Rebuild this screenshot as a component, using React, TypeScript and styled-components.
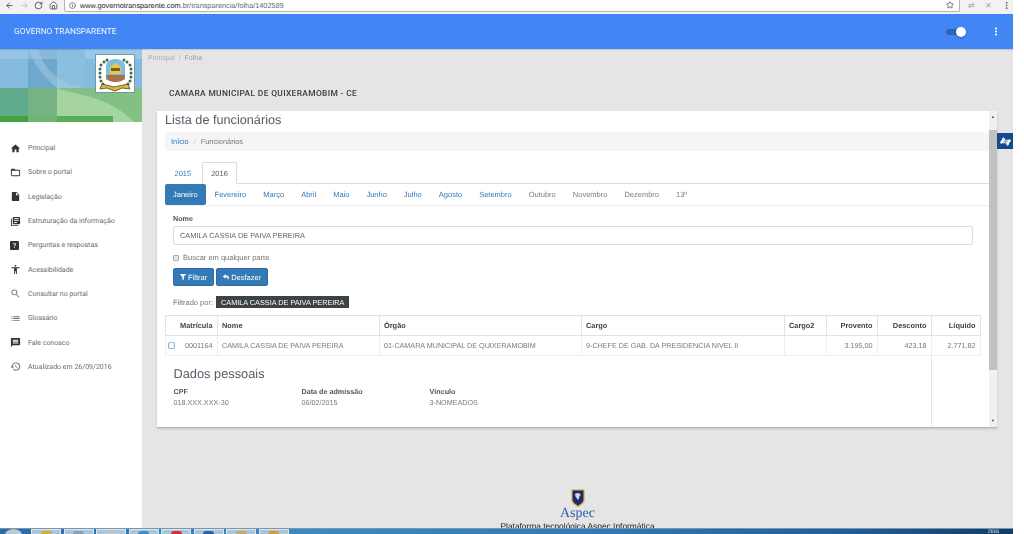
import React from 'react';
import styled, { createGlobalStyle } from 'styled-components';
import { ArrowLeft, ArrowRight, RotateCw, Home, Info, Star, MoreVertical } from 'lucide-react';
import {
  MdHome,
  MdFolderOpen,
  MdInsertDriveFile,
  MdLibraryBooks,
  MdSearch,
  MdList,
  MdMessage,
  MdHistory,
  MdAccessibility,
  MdMoreVert,
} from 'react-icons/md';
import { BsQuestionSquareFill } from 'react-icons/bs';
import { FaFilter, FaReply, FaAmericanSignLanguageInterpreting, FaRegSquare } from 'react-icons/fa';

const menu = [
  { icon: <MdHome />, label: 'Principal' },
  { icon: <MdFolderOpen />, label: 'Sobre o portal' },
  { icon: <MdInsertDriveFile />, label: 'Legislação' },
  { icon: <MdLibraryBooks />, label: 'Estruturação da informação' },
  { icon: <BsQuestionSquareFill size={9} />, label: 'Perguntas e respostas' },
  { icon: <MdAccessibility />, label: 'Acessibilidade' },
  { icon: <MdSearch />, label: 'Consultar no portal', light: true },
  { icon: <MdList />, label: 'Glossário', light: true },
  { icon: <MdMessage />, label: 'Fale conosco' },
  { icon: <MdHistory />, label: 'Atualizado em 26/09/2016', light: true },
];

const months = [
  'Janeiro', 'Fevereiro', 'Março', 'Abril', 'Maio', 'Junho', 'Julho',
  'Agosto', 'Setembro', 'Outubro', 'Novembro', 'Dezembro', '13º',
];

const taskButtons = ['#d9a93a', '#8aa0b8', '#b9c4cc', '#3b8fd0', '#d8342c', '#2b5fa8', '#c9a860', '#d89a3c'];

function Banner() {
  return (
    <BannerArt viewBox="0 0 142 73" preserveAspectRatio="none">
      <rect width="142" height="39" fill="#85bbdf" />
      <rect width="28" height="10" fill="#96c5e4" />
      <rect x="28" width="29" height="39" fill="#6ea8cd" />
      <rect x="28" width="29" height="10" fill="#89b9d8" />
      <rect x="57" width="28" height="39" fill="#8bbfe0" />
      <rect x="85" width="57" height="10" fill="#9ac9e6" />
      <path d="M38 0 C44 22 60 34 84 39 L57 39 C46 30 34 16 28 0 Z" fill="#a3cde6" fillOpacity="0.5" />
      <rect y="39" width="142" height="34" fill="#83c084" />
      <rect y="39" width="28" height="28" fill="#5fab8c" />
      <rect x="28" y="39" width="29" height="28" fill="#76b384" />
      <path d="M57 39 C74 46 108 46 134 73 L57 73 Z" fill="#a6d3a2" />
      <rect y="67" width="28" height="6" fill="#41a23f" />
      <rect x="28" y="67" width="29" height="6" fill="#6fb56f" />
      <rect x="57" y="67" width="56" height="6" fill="#58ad58" />
    </BannerArt>
  );
}

function Emblem() {
  const leaves = [
    [4, 9], [3, 13], [3, 17], [3, 21], [4, 25], [6, 28], [7, 6], [10, 4],
    [33, 9], [34, 13], [34, 17], [34, 21], [33, 25], [31, 28], [30, 6], [27, 4],
  ];
  return (
    <svg width="37" height="36" viewBox="0 0 37 36">
      <rect width="37" height="36" fill="#fff" />
      {leaves.map(([x, y]) => (
        <circle key={`${x}-${y}`} cx={x} cy={y} r="1.5" fill="#44664c" />
      ))}
      <path d="M9 24 V10 C9 5 14 3 18.5 3 C23 3 28 5 28 10 V24 Z" fill="#7dbde0" />
      <path d="M13 11 L18.5 7 L24 11 V18 H13 Z" fill="#e8c64e" />
      <rect x="14" y="12" width="9" height="3" fill="#7a5c20" />
      <path d="M9 19 H28 C28 25 23 26 18.5 26 C14 26 9 25 9 19 Z" fill="#a9714a" />
      <path d="M5 28 L17 31 L31 28 L33 33 L25 32 L18 35 L10 32 L3 33 Z" fill="#e3b92f" stroke="#2a3320" strokeWidth="0.7" />
    </svg>
  );
}

function AspecShield() {
  return (
    <svg width="14" height="18" viewBox="0 0 14 18">
      <path d="M1 1 H13 V11 C13 14 9 16 7 17.5 C5 16 1 14 1 11 Z" fill="#1d2a72" stroke="#e0a92a" strokeWidth="1.2" />
      <path d="M4 5 C6 3 9 4 10 6 C8 6 9 9 7 11 C6 9 4 8 4 5 Z" fill="#cfd8ea" />
    </svg>
  );
}

export default function App() {
  return (
    <Page>
      <GlobalStyle />
      <Window>
        <ChromeBar>
          <ChromeIcons>
            <ArrowLeft size={9} strokeWidth={2.4} />
            <DimIcon><ArrowRight size={9} strokeWidth={2} /></DimIcon>
            <RotateCw size={9} strokeWidth={2.4} />
            <Home size={9} strokeWidth={2.2} />
          </ChromeIcons>
          <AddressBar>
            <Info size={7} strokeWidth={2.4} />
            <Url>
              www.<b>governotransparente.com</b>.<span>br/transparencia/folha/1402589</span>
            </Url>
            <StarSlot><Star size={8} strokeWidth={2.4} /></StarSlot>
          </AddressBar>
          <Extensions>
            <ExtIcon>⇄</ExtIcon>
            <ExtIcon>✕</ExtIcon>
            <MoreVertical size={9} strokeWidth={2.6} />
          </Extensions>
        </ChromeBar>

        <AppBar>
          <Brand>GOVERNO TRANSPARENTE</Brand>
          <Toggle><ToggleKnob /></Toggle>
          <BarMenu><MdMoreVert /></BarMenu>
        </AppBar>

        <Body>
          <Sidebar>
            <BannerBox>
              <Banner />
              <EmblemFrame><Emblem /></EmblemFrame>
            </BannerBox>
            <Nav>
              {menu.map((item) => (
                <NavItem key={item.label}>
                  <NavIcon $light={item.light}>{item.icon}</NavIcon>
                  {item.label}
                </NavItem>
              ))}
            </Nav>
          </Sidebar>

          <Main>
            <TopCrumbs>Principal &nbsp;/&nbsp; <CrumbNow>Folha</CrumbNow></TopCrumbs>
            <OrgName>CAMARA MUNICIPAL DE QUIXERAMOBIM - CE</OrgName>

            <Card>
              <CardContent>
                <Title>Lista de funcionários</Title>
                <Breadcrumb>
                  <BlueLink>Início</BlueLink>
                  <CrumbSep>/</CrumbSep>
                  <span>Funcionários</span>
                </Breadcrumb>

                <Tabs>
                  <Tab>2015</Tab>
                  <Tab $active>2016</Tab>
                </Tabs>

                <Pills>
                  {months.map((m, i) => (
                    <Pill key={m} $active={i === 0} $muted={i >= 9}>{m}</Pill>
                  ))}
                </Pills>

                <FilterForm>
                  <FieldLabel>Nome</FieldLabel>
                  <TextInput>CAMILA CASSIA DE PAIVA PEREIRA</TextInput>
                  <CheckRow>
                    <CheckBox />
                    Buscar em qualquer parte
                  </CheckRow>
                  <Buttons>
                    <ActionButton><FaFilter /> Filtrar</ActionButton>
                    <ActionButton><FaReply /> Desfazer</ActionButton>
                  </Buttons>
                  <FilteredBy>
                    Filtrado por:
                    <FilterTag>CAMILA CASSIA DE PAIVA PEREIRA</FilterTag>
                  </FilteredBy>
                </FilterForm>

                <Table>
                  <colgroup>
                    <col width="52" />
                    <col width="162" />
                    <col width="202" />
                    <col width="203" />
                    <col width="42" />
                    <col width="51" />
                    <col width="54" />
                    <col width="49" />
                  </colgroup>
                  <thead>
                    <tr>
                      <Th $right>Matrícula</Th>
                      <Th>Nome</Th>
                      <Th>Órgão</Th>
                      <Th>Cargo</Th>
                      <Th>Cargo2</Th>
                      <Th $right>Provento</Th>
                      <Th $right>Desconto</Th>
                      <Th $right>Líquido</Th>
                    </tr>
                  </thead>
                  <tbody>
                    <tr>
                      <Td $right>
                        <Expander><FaRegSquare /></Expander>
                        0001164
                      </Td>
                      <Td>CAMILA CASSIA DE PAIVA PEREIRA</Td>
                      <Td>01-CAMARA MUNICIPAL DE QUIXERAMOBIM</Td>
                      <Td>9-CHEFE DE GAB. DA PRESIDENCIA NIVEL II</Td>
                      <Td />
                      <Td $right>3.195,00</Td>
                      <Td $right>423,18</Td>
                      <Td $right>2.771,82</Td>
                    </tr>
                    <tr>
                      <DetailCell colSpan={7}>
                        <DetailTitle>Dados pessoais</DetailTitle>
                        <DetailGrid>
                          <div>
                            <DetailLabel>CPF</DetailLabel>
                            <DetailValue>018.XXX.XXX-30</DetailValue>
                          </div>
                          <div>
                            <DetailLabel>Data de admissão</DetailLabel>
                            <DetailValue>06/02/2015</DetailValue>
                          </div>
                          <div>
                            <DetailLabel>Vínculo</DetailLabel>
                            <DetailValue>3-NOMEADOS</DetailValue>
                          </div>
                        </DetailGrid>
                      </DetailCell>
                      <EmptyEnd />
                    </tr>
                  </tbody>
                </Table>
              </CardContent>

              <ScrollTrack>
                <ScrollArrow>▲</ScrollArrow>
                <ScrollThumb />
                <ScrollArrow>▼</ScrollArrow>
              </ScrollTrack>
            </Card>

            <Footer>
              <AspecShield />
              <AspecName>Aspec</AspecName>
              <Platform>Plataforma tecnológica Aspec Informática</Platform>
            </Footer>

            <A11yWidget><FaAmericanSignLanguageInterpreting /></A11yWidget>
          </Main>
        </Body>

        <Taskbar>
          <StartOrb />
          {taskButtons.map((c) => (
            <TaskButton key={c} $dot={c} />
          ))}
          <TrayClock>2016</TrayClock>
        </Taskbar>
      </Window>
    </Page>
  );
}

const GlobalStyle = createGlobalStyle`
  html, body, #root {
    margin: 0;
    height: 100%;
    background: #fff;
  }
  * {
    box-sizing: border-box;
  }
`;

const Page = styled.div`
  width: 1024px;
  height: 534px;
  overflow: hidden;
  font-family: 'Liberation Sans', Arial, sans-serif;
  font-size: 7.5px;
  color: #6f6f6f;
  text-rendering: geometricPrecision;
`;

/* the reference is a scaled-down capture, so everything sits slightly soft */
const Window = styled.div`
  width: 1013px;
  height: 534px;
  display: flex;
  flex-direction: column;
  filter: blur(0.3px);
`;

const ChromeBar = styled.div`
  height: 14px;
  flex: none;
  display: flex;
  align-items: flex-start;
  background: #f2f2f2;
  color: #555;
`;

const ChromeIcons = styled.div`
  width: 64px;
  height: 10px;
  padding: 1px 0 0 5px;
  display: flex;
  gap: 5.5px;
`;

const DimIcon = styled.span`
  color: #bbb;
`;

const AddressBar = styled.div`
  flex: 1;
  height: 13px;
  margin-top: -1px;
  padding: 0 5px 0 4px;
  display: flex;
  align-items: center;
  gap: 4px;
  background: #fff;
  border: 1px solid #b4b4b4;
  border-top: none;
  border-radius: 0 0 2px 2px;
`;

const Url = styled.div`
  flex: 1;
  font-size: 7.3px;
  color: #2b2b2b;
  white-space: nowrap;

  b {
    font-weight: 400;
    color: #1a1a1a;
  }
  span {
    color: #5c6a7c;
  }
`;

const StarSlot = styled.span`
  display: flex;
  color: #555;
`;

const Extensions = styled.div`
  width: 53px;
  height: 10px;
  padding: 1px 0 0 8px;
  display: flex;
  gap: 7px;
  color: #555;
`;

const ExtIcon = styled.span`
  width: 10px;
  font-size: 8px;
  line-height: 9px;
  color: #aaa;
`;

const AppBar = styled.header`
  height: 35px;
  flex: none;
  display: flex;
  align-items: center;
  padding: 0 11px 0 14px;
  background: #4285f4;
  color: #fff;
  box-shadow: 0 1px 1px rgba(0, 0, 0, 0.12);
  position: relative;
  z-index: 1;
`;

const Brand = styled.div`
  flex: 1;
  font-family: Roboto, sans-serif;
  font-size: 8.4px;
  color: #f2f6ff;
`;

const Toggle = styled.div`
  width: 19px;
  height: 6px;
  margin-right: 25px;
  background: #2f62bd;
  border-radius: 3px;
  display: flex;
  justify-content: flex-end;
  align-items: center;
`;

const ToggleKnob = styled.div`
  width: 10px;
  height: 10px;
  margin-right: -1px;
  border-radius: 50%;
  background: #fff;
  box-shadow: 0 1px 2px rgba(0, 0, 0, 0.3);
`;

const BarMenu = styled.div`
  width: 12px;
  display: flex;
  justify-content: center;
  font-size: 13px;
`;

const Body = styled.div`
  flex: 1;
  min-height: 0;
  display: flex;
`;

const Sidebar = styled.aside`
  width: 142px;
  flex: none;
  background: #fff;
`;

const BannerBox = styled.div`
  height: 73px;
  position: relative;
`;

const BannerArt = styled.svg`
  display: block;
  width: 100%;
  height: 100%;
`;

const EmblemFrame = styled.div`
  position: absolute;
  top: 5px;
  left: 95px;
  width: 40px;
  height: 39px;
  display: flex;
  align-items: center;
  justify-content: center;
  background: #fff;
  border: 1.5px solid #6f9aa6;
`;

const Nav = styled.nav`
  padding-top: 14px;
`;

const NavItem = styled.div`
  height: 24.3px;
  display: flex;
  align-items: center;
  padding-left: 10px;
  font-family: Roboto, sans-serif;
  font-size: 7px;
  color: #6b6b6b;
  white-space: nowrap;
`;

const NavIcon = styled.span<{ $light?: boolean }>`
  width: 18px;
  flex: none;
  display: flex;
  font-size: 11px;
  color: ${(p) => (p.$light ? '#707070' : '#333')};
`;

const Main = styled.main`
  flex: 1;
  min-width: 0;
  display: flex;
  flex-direction: column;
  background: #e4e5e4;
  overflow: hidden;
  position: relative;
`;

const TopCrumbs = styled.div`
  height: 20px;
  flex: none;
  padding: 6px 0 0 6px;
  font-size: 7px;
  color: #ababab;
`;

const CrumbNow = styled.span`
  color: #999;
`;

const OrgName = styled.div`
  height: 42px;
  flex: none;
  padding: 20px 0 0 27px;
  font-family: Roboto, sans-serif;
  font-size: 8.4px;
  font-weight: 500;
  letter-spacing: 0.36px;
  color: #3a3a3a;
`;

const Card = styled.section`
  height: 317px;
  flex: none;
  margin: 0 16px 0 15px;
  display: flex;
  background: #fff;
  border-bottom: 1px solid #b5b5b5;
  box-shadow: 0 1px 2px rgba(0, 0, 0, 0.15);
  overflow: hidden;
`;

const CardContent = styled.div`
  flex: 1;
  min-width: 0;
  padding: 0 0 0 8px;
  display: flex;
  flex-direction: column;
`;

const Title = styled.h1`
  margin: 0;
  height: 21px;
  padding-top: 1px;
  font-size: 12.7px;
  line-height: 16px;
  font-weight: 400;
  color: #555c66;
`;

const Breadcrumb = styled.div`
  height: 19px;
  display: flex;
  align-items: center;
  gap: 5px;
  padding-left: 6px;
  background: #f5f5f5;
  border-radius: 2px;
  font-size: 7.4px;
  color: #777;
`;

const BlueLink = styled.span`
  color: #337ab7;
`;

const CrumbSep = styled.span`
  color: #ccc;
`;

const Tabs = styled.div`
  height: 22px;
  flex: none;
  margin: 11px 0 0;
  display: flex;
  border-bottom: 1px solid #ddd;
`;

const Tab = styled.div<{ $active?: boolean }>`
  height: 22px;
  padding: 0 8.5px;
  margin-right: 1px;
  display: flex;
  align-items: center;
  font-size: 7.5px;
  color: ${(p) => (p.$active ? '#555' : '#337ab7')};
  background: #fff;
  border: 1px solid ${(p) => (p.$active ? '#ddd' : 'transparent')};
  border-bottom-color: ${(p) => (p.$active ? '#fff' : 'transparent')};
  border-radius: 2px 2px 0 0;
`;

const Pills = styled.div`
  height: 22px;
  flex: none;
  display: flex;
  border-bottom: 1px solid #eee;
`;

const Pill = styled.div<{ $active?: boolean; $muted?: boolean }>`
  height: 21px;
  padding: 0 8px;
  margin-right: 1px;
  display: flex;
  align-items: center;
  font-size: 7.5px;
  border-radius: 2px;
  color: ${(p) => (p.$active ? '#fff' : p.$muted ? '#7d7d7d' : '#337ab7')};
  background: ${(p) => (p.$active ? '#337ab7' : 'transparent')};
`;

const FilterForm = styled.div`
  padding: 8px 16px 0 8px;
  height: 109px;
  flex: none;
  display: flex;
  flex-direction: column;
  align-items: flex-start;
`;

const FieldLabel = styled.div`
  height: 12px;
  font-size: 7.2px;
  font-weight: 700;
  color: #555;
  line-height: 9px;
`;

const TextInput = styled.div`
  width: 100%;
  height: 19px;
  flex: none;
  padding-left: 6px;
  display: flex;
  align-items: center;
  background: #fff;
  border: 1px solid #ddd;
  border-radius: 2px;
  font-size: 7.4px;
  color: #666;
`;

const CheckRow = styled.div`
  height: 23px;
  flex: none;
  padding-top: 2px;
  display: flex;
  align-items: center;
  gap: 4px;
  font-size: 7.5px;
  color: #777;
`;

const CheckBox = styled.span`
  width: 6px;
  height: 6px;
  background: #e8e8e8;
  border: 1px solid #aaa;
  border-radius: 1px;
`;

const Buttons = styled.div`
  display: flex;
  gap: 2px;
  height: 18px;
  flex: none;
`;

const ActionButton = styled.div`
  height: 18px;
  padding: 0 6px;
  display: flex;
  align-items: center;
  gap: 2px;
  background: #337ab7;
  border: 1px solid #2e6da4;
  border-radius: 2px;
  color: #fff;
  font-size: 7.5px;

  svg {
    font-size: 6px;
  }
`;

const FilteredBy = styled.div`
  margin-top: 10px;
  height: 12px;
  display: flex;
  align-items: center;
  gap: 3px;
  font-size: 7.5px;
  color: #777;
`;

const FilterTag = styled.span`
  height: 12px;
  padding: 0 5px;
  display: flex;
  align-items: center;
  background: #3c4246;
  color: #fff;
  font-size: 7.3px;
`;

const Table = styled.table`
  width: 815px;
  flex: 1;
  border-collapse: collapse;
  table-layout: fixed;
`;

const Th = styled.th<{ $right?: boolean }>`
  height: 20px;
  padding: 0 4.5px 0 4px;
  font-size: 7.4px;
  font-weight: 700;
  color: #444;
  text-align: ${(p) => (p.$right ? 'right' : 'left')};
  border: 1px solid #e2e2e2;
  white-space: nowrap;
`;

const Td = styled.td<{ $right?: boolean }>`
  height: 20px;
  padding: 0 4.5px 0 4px;
  font-size: 7.2px;
  color: #7a7a7a;
  text-align: ${(p) => (p.$right ? 'right' : 'left')};
  border: 1px solid #efefef;
  white-space: nowrap;
  position: relative;
`;

const Expander = styled.span`
  position: absolute;
  left: 2px;
  top: 6px;
  font-size: 7px;
  color: #337ab7;
`;

const DetailCell = styled.td`
  padding: 10px 0 0 8px;
  vertical-align: top;
`;

const EmptyEnd = styled.td`
  border-left: 1px solid #e6e6e6;
`;

const DetailTitle = styled.div`
  height: 20px;
  font-size: 12.8px;
  line-height: 16px;
  color: #555c66;
`;

const DetailGrid = styled.div`
  display: grid;
  grid-template-columns: 128px 128px 128px;
`;

const DetailLabel = styled.div`
  font-size: 7.2px;
  font-weight: 700;
  line-height: 11px;
  color: #555;
`;

const DetailValue = styled.div`
  font-size: 7.2px;
  line-height: 11px;
  color: #7a7a7a;
`;

const ScrollTrack = styled.div`
  width: 8px;
  flex: none;
  display: flex;
  flex-direction: column;
  background: #f1f1f1;
`;

const ScrollArrow = styled.div`
  height: 12px;
  font-size: 4px;
  line-height: 12px;
  text-align: center;
  color: #444;
`;

const ScrollThumb = styled.div`
  height: 240px;
  margin: 7px 0 auto;
  background: #c1c1c1;
`;

const Footer = styled.footer`
  margin-top: 61px;
  display: flex;
  flex-direction: column;
  align-items: center;
  flex: none;
`;

const AspecName = styled.div`
  font-family: 'Liberation Serif', serif;
  font-size: 14px;
  line-height: 13px;
  color: #2c5fa8;
`;

const Platform = styled.div`
  margin-top: 1px;
  font-size: 8.4px;
  line-height: 10px;
  color: #222;
  white-space: nowrap;
`;

const A11yWidget = styled.div`
  position: absolute;
  top: 84px;
  right: 0;
  width: 16px;
  height: 16px;
  display: flex;
  align-items: center;
  justify-content: center;
  background: #134a8e;
  color: #fff;
  font-size: 11px;
`;

const Taskbar = styled.div`
  height: 6px;
  flex: none;
  display: flex;
  align-items: flex-start;
  padding-left: 5px;
  background: linear-gradient(90deg, #2c6ba8 0%, #3a8ac4 30%, #2f7ab8 60%, #1d5c98 85%, #123c68 100%);
  border-top: 1px solid #7d95ab;
  overflow: hidden;
`;

const StartOrb = styled.div`
  width: 17px;
  height: 12px;
  margin-right: 9px;
  border-radius: 50%;
  background: #b8ccd8;
`;

const TaskButton = styled.div<{ $dot: string }>`
  width: 30px;
  height: 6px;
  margin-right: 2.5px;
  display: flex;
  justify-content: center;
  background: #aac6da;
  border: 1px solid #dce8f0;
  border-bottom: none;

  &::after {
    content: '';
    width: 11px;
    height: 8px;
    margin-top: 1px;
    border-radius: 3px 3px 0 0;
    background: ${(p) => p.$dot};
  }
`;

const TrayClock = styled.div`
  margin-left: auto;
  padding-right: 14px;
  font-size: 5px;
  line-height: 6px;
  color: #fff;
`;
